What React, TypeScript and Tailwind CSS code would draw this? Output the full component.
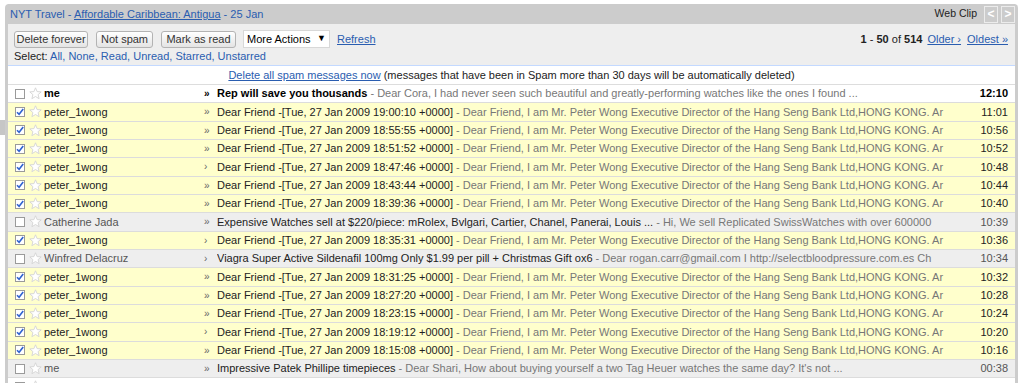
import React from "react";

type Row = {
  sender: string;
  arrow: string;
  subject: string;
  snippet: string;
  time: string;
  kind: "unread" | "checked" | "read";
};

const peterSnip =
  " - Dear Friend, I am Mr. Peter Wong Executive Director of the Hang Seng Bank Ltd,HONG KONG. Ar";

const rows: Row[] = [
  { sender: "me", arrow: "»", subject: "Rep will save you thousands", snippet: " - Dear Cora, I had never seen such beautiful and greatly-performing watches like the ones I found ...", time: "12:10", kind: "unread" },
  { sender: "peter_1wong", arrow: "»", subject: "Dear Friend -[Tue, 27 Jan 2009 19:00:10 +0000]", snippet: peterSnip, time: "11:01", kind: "checked" },
  { sender: "peter_1wong", arrow: "»", subject: "Dear Friend -[Tue, 27 Jan 2009 18:55:55 +0000]", snippet: peterSnip, time: "10:56", kind: "checked" },
  { sender: "peter_1wong", arrow: "»", subject: "Dear Friend -[Tue, 27 Jan 2009 18:51:52 +0000]", snippet: peterSnip, time: "10:52", kind: "checked" },
  { sender: "peter_1wong", arrow: "›", subject: "Dear Friend -[Tue, 27 Jan 2009 18:47:46 +0000]", snippet: peterSnip, time: "10:48", kind: "checked" },
  { sender: "peter_1wong", arrow: "»", subject: "Dear Friend -[Tue, 27 Jan 2009 18:43:44 +0000]", snippet: peterSnip, time: "10:44", kind: "checked" },
  { sender: "peter_1wong", arrow: "»", subject: "Dear Friend -[Tue, 27 Jan 2009 18:39:36 +0000]", snippet: peterSnip, time: "10:40", kind: "checked" },
  { sender: "Catherine Jada", arrow: "»", subject: "Expensive Watches sell at $220/piece: mRolex, Bvlgari, Cartier, Chanel, Panerai, Louis ...", snippet: " - Hi, We sell Replicated SwissWatches with over 600000", time: "10:39", kind: "read" },
  { sender: "peter_1wong", arrow: "›", subject: "Dear Friend -[Tue, 27 Jan 2009 18:35:31 +0000]", snippet: peterSnip, time: "10:36", kind: "checked" },
  { sender: "Winfred Delacruz", arrow: "›", subject: "Viagra Super Active Sildenafil 100mg Only $1.99 per pill + Christmas Gift ox6", snippet: " - Dear rogan.carr@gmail.com I http://selectbloodpressure.com.es Ch", time: "10:34", kind: "read" },
  { sender: "peter_1wong", arrow: "»", subject: "Dear Friend -[Tue, 27 Jan 2009 18:31:25 +0000]", snippet: peterSnip, time: "10:32", kind: "checked" },
  { sender: "peter_1wong", arrow: "»", subject: "Dear Friend -[Tue, 27 Jan 2009 18:27:20 +0000]", snippet: peterSnip, time: "10:28", kind: "checked" },
  { sender: "peter_1wong", arrow: "»", subject: "Dear Friend -[Tue, 27 Jan 2009 18:23:15 +0000]", snippet: peterSnip, time: "10:24", kind: "checked" },
  { sender: "peter_1wong", arrow: "›", subject: "Dear Friend -[Tue, 27 Jan 2009 18:19:12 +0000]", snippet: peterSnip, time: "10:20", kind: "checked" },
  { sender: "peter_1wong", arrow: "»", subject: "Dear Friend -[Tue, 27 Jan 2009 18:15:08 +0000]", snippet: peterSnip, time: "10:16", kind: "checked" },
  { sender: "me", arrow: "»", subject: "Impressive Patek Phillipe timepieces", snippet: " - Dear Shari, How about buying yourself a two Tag Heuer watches the same day? It's not ...", time: "00:38", kind: "read" },
  { sender: "", arrow: "", subject: "", snippet: "", time: "", kind: "unread" },
];

function Checkbox({ checked }: { checked: boolean }) {
  return (
    <div className="w-[10px] h-[10px] border border-[#9a9a9a] bg-white flex items-center justify-center shrink-0">
      {checked && (
        <svg width="8" height="8" viewBox="0 0 8 8">
          <path d="M1 4.2 L3.1 6.3 L7.2 1" stroke="#2f62d0" strokeWidth="1.6" fill="none" />
        </svg>
      )}
    </div>
  );
}

function Star() {
  return (
    <svg width="13" height="13" viewBox="0 0 13 13" className="shrink-0">
      <polygon
        points="6.5,0.8 8.1,4.6 12.2,4.9 9.1,7.6 10.1,11.7 6.5,9.5 2.9,11.7 3.9,7.6 0.8,4.9 4.9,4.6"
        fill="#ffffff"
        stroke="#d4d4d4"
        strokeWidth="0.9"
        strokeLinejoin="round"
      />
    </svg>
  );
}

function Btn({ label, w }: { label: string; w: string }) {
  return (
    <div
      className={`${w} h-[17px] rounded-[3px] border border-[#b3b3b3] bg-gradient-to-b from-white to-[#e4e4e4] text-[#333] flex items-center justify-center`}
    >
      {label}
    </div>
  );
}

export default function App() {
  return (
    <div className="relative w-[1024px] h-[383px] overflow-hidden bg-white text-[11px] font-['Liberation_Sans',Arial,sans-serif] text-[#222]">
      <div className="absolute left-0 top-[120px] w-[8px] h-[15px] bg-[#c6c6c6]" />
      <div className="relative ml-[5px] mt-[4px] w-[1013px] border-x-[3px] border-[#cccccc] rounded-t-[4px]">
        {/* Web clip bar */}
        <div className="h-[20px] bg-[#cccccc] flex items-center justify-between pl-[2px]">
          <div className="text-[#2a5db0]">
            NYT Travel - <span className="underline">Affordable Caribbean: Antigua</span> - 25 Jan
          </div>
          <div className="flex items-center">
            <span className="text-[#222] text-[10.5px] mr-[7px]">Web Clip</span>
            <div className="w-[14px] h-[17px] border border-[#ececec] text-white flex items-center justify-center font-bold text-[12px]">&lt;</div>
            <div className="w-[14px] h-[17px] border border-[#ececec] text-white flex items-center justify-center font-bold text-[12px] ml-[3px]">&gt;</div>
          </div>
        </div>
        {/* toolbar */}
        <div className="h-[42px] bg-[#eeeeee] border-b border-[#c3d9ff] pl-[6px] pr-[7px] pt-[6px]">
          <div className="flex items-center justify-between">
            <div className="flex items-center">
              <Btn label="Delete forever" w="w-[74px]" />
              <div className="w-[8px]" />
              <Btn label="Not spam" w="w-[57px]" />
              <div className="w-[8px]" />
              <Btn label="Mark as read" w="w-[75px]" />
              <div className="w-[7px]" />
              <div className="w-[87px] h-[18px] bg-white border border-[#d8d8d8] flex items-center justify-between px-[3px] text-black">
                <span>More Actions</span>
                <span className="text-[9px]">▼</span>
              </div>
              <span className="ml-[7px] text-[#2a5db0] underline">Refresh</span>
            </div>
            <div className="flex items-center gap-[5px]">
              <span>
                <b>1</b> - <b>50</b> of <b>514</b>
              </span>
              <span className="text-[#2a5db0] underline">Older ›</span>
              <span className="ml-[1px] text-[#2a5db0] underline">Oldest »</span>
            </div>
          </div>
          <div className="mt-[2px] leading-[13px]">
            Select: <span className="text-[#2a5db0]">All, None, Read, Unread, Starred, Unstarred</span>
          </div>
        </div>
        {/* spam notice */}
        <div className="h-[19px] bg-white border-b border-[#dddddd] flex items-center justify-center">
          <span className="text-[#2a5db0] underline">Delete all spam messages now</span>
          <span>&nbsp;(messages that have been in Spam more than 30 days will be automatically deleted)</span>
        </div>
        {/* rows */}
        {rows.map((r, i) => {
          const bg =
            r.kind === "checked" ? "bg-[#ffffcc]" : r.kind === "read" ? "bg-[#eeeeee]" : "bg-white";
          const bold = r.kind === "unread";
          return (
            <div
              key={i}
              className={`${bg} h-[18.33px] border-b border-[#dcdcdc] flex items-center pl-[7px] pr-[7px] whitespace-nowrap`}
            >
              <Checkbox checked={r.kind === "checked"} />
              <div className="w-[4px]" />
              <Star />
              <div className="w-[2px]" />
              <div className={`w-[160px] overflow-hidden ${bold ? "font-bold text-black" : r.kind === "read" ? "text-[#555]" : "text-[#222]"}`}>
                {r.sender}
              </div>
              <div className={`w-[13px] text-[10px] ${bold ? "font-bold text-black" : "text-[#666]"}`}>{r.arrow}</div>
              <div className="w-[735px] overflow-hidden">
                <span className={bold ? "font-bold text-black" : "text-[#222]"}>{r.subject}</span>
                <span className="text-[#777]">{r.snippet}</span>
              </div>
              <div className={`flex-1 text-right ${bold ? "font-bold text-black" : r.kind === "read" ? "text-[#555]" : "text-[#222]"}`}>
                {r.time}
              </div>
            </div>
          );
        })}
      </div>
    </div>
  );
}
